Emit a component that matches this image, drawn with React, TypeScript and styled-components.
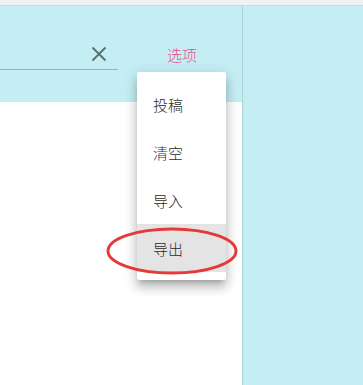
import React from 'react';
import styled, { createGlobalStyle } from 'styled-components';

const GlobalStyle = createGlobalStyle`
    html, body, #root {
        margin: 0;
        height: 100%;
    }
    body {
        font-family: "Noto Sans CJK SC", "Noto Sans", sans-serif;
        overflow: hidden;
    }
`;

const Page = styled.div`
    position: relative;
    height: 100vh;
    display: flex;
    flex-direction: column;
`;

const TopStrip = styled.div`
    height: 5px;
    background: #f1f1f1;
    border-bottom: 1px solid #d4d4de;
`;

const Main = styled.div`
    flex: 1;
    display: flex;
    background: #c5eef4;
`;

const LeftPanel = styled.div`
    width: 242px;
    border-right: 1px solid #a8d3d9;
    display: flex;
    flex-direction: column;
`;

const Header = styled.div`
    height: 96px;
    box-sizing: border-box;
    padding-top: 32px;
    display: flex;
    align-items: flex-start;
    background: #c5eef4;
`;

const SearchField = styled.div`
    width: 118px;
    height: 32px;
    box-sizing: border-box;
    border-bottom: 1px solid #93b8be;
    display: flex;
    align-items: center;
    justify-content: flex-end;
    padding-right: 7px;
`;

const ClearButton = styled.button`
    width: 24px;
    height: 24px;
    padding: 0;
    border: none;
    background: transparent;
    display: flex;
    align-items: center;
    justify-content: center;
`;

const OptionButton = styled.button`
    margin-left: 32px;
    width: 64px;
    height: 32px;
    padding: 0;
    border: none;
    background: transparent;
    color: #e8508a;
    font-family: "Noto Sans CJK SC", sans-serif;
    font-size: 15px;
    font-weight: 300;
`;

const Content = styled.div`
    flex: 1;
    background: #ffffff;
`;

const RightPanel = styled.div`
    flex: 1;
`;

const Menu = styled.ul`
    position: absolute;
    top: 72px;
    left: 137px;
    width: 89px;
    margin: 0;
    padding: 8px 0;
    list-style: none;
    background: #ffffff;
    border-radius: 2px;
    box-shadow: 0px 5px 5px -3px rgba(0, 0, 0, 0.2), 0px 8px 10px 1px rgba(0, 0, 0, 0.14),
        0px 3px 14px 2px rgba(0, 0, 0, 0.12);
`;

const MenuItem = styled.li<{ active?: boolean }>`
    height: 48px;
    padding-left: 16px;
    display: flex;
    align-items: center;
    font-size: 15px;
    font-weight: 300;
    color: #2b2b2b;
    background: ${props => (props.active ? '#e4e4e4' : 'transparent')};
`;

const Annotation = styled.svg`
    position: absolute;
    left: 105px;
    top: 226px;
    pointer-events: none;
`;

const items = ['投稿', '清空', '导入', '导出'];

function App() {
    return (
        <Page>
            <GlobalStyle />
            <TopStrip />
            <Main>
                <LeftPanel>
                    <Header>
                        <SearchField>
                            <ClearButton>
                                <svg width="16" height="16" viewBox="0 0 16 16">
                                    <path d="M1.5 1.5 L14.5 14.5 M14.5 1.5 L1.5 14.5" stroke="#5b6d6d" strokeWidth="1.8" fill="none" />
                                </svg>
                            </ClearButton>
                        </SearchField>
                        <OptionButton>选项</OptionButton>
                    </Header>
                    <Content />
                </LeftPanel>
                <RightPanel />
            </Main>
            <Menu>
                {items.map((label, i) => (
                    <MenuItem key={label} active={i === items.length - 1}>
                        {label}
                    </MenuItem>
                ))}
            </Menu>
            <Annotation width="134" height="50" viewBox="0 0 134 50">
                <ellipse cx="67" cy="25" rx="64" ry="22" stroke="#e53a3a" strokeWidth="3" fill="none" />
            </Annotation>
        </Page>
    );
}

export default App;
